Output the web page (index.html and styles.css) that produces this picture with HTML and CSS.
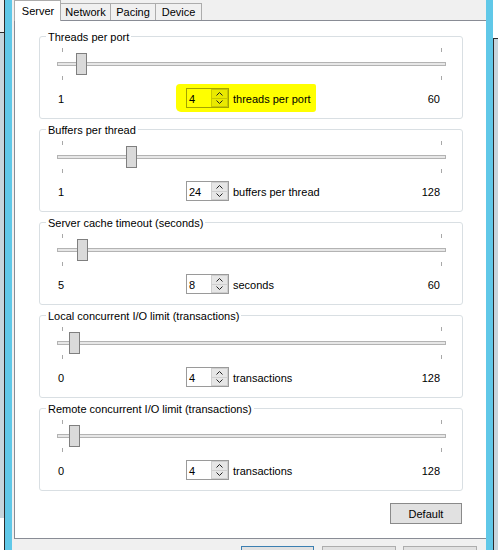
FILE: index.html
```html
<!DOCTYPE html>
<html>
<head>
<meta charset="utf-8">
<link rel="stylesheet" href="styles.css">
</head>
<body>
<div class="screen">
  <div class="edge-left">
    <div class="el-top"></div>
    <div class="el-mid"></div>
    <div class="el-bot"></div>
  </div>
  <div class="stripe"></div>
  <div class="dialog">
    <div class="tabs">
      <div class="tab active">Server</div>
      <div class="tab t-net">Network</div>
      <div class="tab t-pac">Pacing</div>
      <div class="tab t-dev">Device</div>
    </div>
    <div class="panel">
      <div class="group">
        <div class="legend"><span>Threads per port</span></div>
        <div class="slider">
          <div class="ticks"><i></i><i></i></div>
          <div class="track"></div>
          <div class="ticks ticks-bottom"><i></i><i></i></div>
          <div class="thumb" style="left:19px"></div>
        </div>
        <div class="row">
          <span class="min">1</span>
          <div class="hl">
            <div class="spin">
              <div class="spin-input">4</div>
              <div class="spin-btns">
                <div class="spin-btn"><svg width="7" height="4" viewBox="0 0 7 4"><polyline points="0.5,3.5 3.5,0.5 6.5,3.5" fill="none" stroke="#222" stroke-width="1"/></svg></div>
                <div class="spin-btn"><svg width="7" height="4" viewBox="0 0 7 4"><polyline points="0.5,0.5 3.5,3.5 6.5,0.5" fill="none" stroke="#222" stroke-width="1"/></svg></div>
              </div>
            </div>
            <span class="unit">threads per port</span>
          </div>
          <span class="max">60</span>
        </div>
      </div>

      <div class="group">
        <div class="legend"><span>Buffers per thread</span></div>
        <div class="slider">
          <div class="ticks"><i></i><i></i></div>
          <div class="track"></div>
          <div class="ticks ticks-bottom"><i></i><i></i></div>
          <div class="thumb" style="left:69px"></div>
        </div>
        <div class="row">
          <span class="min">1</span>
          <div class="spin">
            <div class="spin-input">24</div>
            <div class="spin-btns">
              <div class="spin-btn"><svg width="7" height="4" viewBox="0 0 7 4"><polyline points="0.5,3.5 3.5,0.5 6.5,3.5" fill="none" stroke="#222" stroke-width="1"/></svg></div>
              <div class="spin-btn"><svg width="7" height="4" viewBox="0 0 7 4"><polyline points="0.5,0.5 3.5,3.5 6.5,0.5" fill="none" stroke="#222" stroke-width="1"/></svg></div>
            </div>
          </div>
          <span class="unit">buffers per thread</span>
          <span class="max">128</span>
        </div>
      </div>

      <div class="group">
        <div class="legend"><span>Server cache timeout (seconds)</span></div>
        <div class="slider">
          <div class="ticks"><i></i><i></i></div>
          <div class="track"></div>
          <div class="ticks ticks-bottom"><i></i><i></i></div>
          <div class="thumb" style="left:20px"></div>
        </div>
        <div class="row">
          <span class="min">5</span>
          <div class="spin">
            <div class="spin-input">8</div>
            <div class="spin-btns">
              <div class="spin-btn"><svg width="7" height="4" viewBox="0 0 7 4"><polyline points="0.5,3.5 3.5,0.5 6.5,3.5" fill="none" stroke="#222" stroke-width="1"/></svg></div>
              <div class="spin-btn"><svg width="7" height="4" viewBox="0 0 7 4"><polyline points="0.5,0.5 3.5,3.5 6.5,0.5" fill="none" stroke="#222" stroke-width="1"/></svg></div>
            </div>
          </div>
          <span class="unit">seconds</span>
          <span class="max">60</span>
        </div>
      </div>

      <div class="group">
        <div class="legend"><span>Local concurrent I/O limit (transactions)</span></div>
        <div class="slider">
          <div class="ticks"><i></i><i></i></div>
          <div class="track"></div>
          <div class="ticks ticks-bottom"><i></i><i></i></div>
          <div class="thumb" style="left:12px"></div>
        </div>
        <div class="row">
          <span class="min">0</span>
          <div class="spin">
            <div class="spin-input">4</div>
            <div class="spin-btns">
              <div class="spin-btn"><svg width="7" height="4" viewBox="0 0 7 4"><polyline points="0.5,3.5 3.5,0.5 6.5,3.5" fill="none" stroke="#222" stroke-width="1"/></svg></div>
              <div class="spin-btn"><svg width="7" height="4" viewBox="0 0 7 4"><polyline points="0.5,0.5 3.5,3.5 6.5,0.5" fill="none" stroke="#222" stroke-width="1"/></svg></div>
            </div>
          </div>
          <span class="unit">transactions</span>
          <span class="max">128</span>
        </div>
      </div>

      <div class="group">
        <div class="legend"><span>Remote concurrent I/O limit (transactions)</span></div>
        <div class="slider">
          <div class="ticks"><i></i><i></i></div>
          <div class="track"></div>
          <div class="ticks ticks-bottom"><i></i><i></i></div>
          <div class="thumb" style="left:12px"></div>
        </div>
        <div class="row">
          <span class="min">0</span>
          <div class="spin">
            <div class="spin-input">4</div>
            <div class="spin-btns">
              <div class="spin-btn"><svg width="7" height="4" viewBox="0 0 7 4"><polyline points="0.5,3.5 3.5,0.5 6.5,3.5" fill="none" stroke="#222" stroke-width="1"/></svg></div>
              <div class="spin-btn"><svg width="7" height="4" viewBox="0 0 7 4"><polyline points="0.5,0.5 3.5,3.5 6.5,0.5" fill="none" stroke="#222" stroke-width="1"/></svg></div>
            </div>
          </div>
          <span class="unit">transactions</span>
          <span class="max">128</span>
        </div>
      </div>

      <div class="actions">
        <button class="btn btn-default">Default</button>
      </div>
    </div>
    <div class="footer">
      <div class="fbtn fbtn-primary"></div>
      <div class="fbtn fbtn-2"></div>
      <div class="fbtn fbtn-3"></div>
    </div>
  </div>
  <div class="stripe"></div>
  <div class="edge-right">
    <div class="er-top"></div>
    <div class="er-body"></div>
  </div>
</div>
</body>
</html>
```
FILE: styles.css
```css
* { box-sizing: border-box; }
html, body {
  margin: 0;
  padding: 0;
}
body {
  width: 498px;
  height: 550px;
  overflow: hidden;
  background: #f0f0f0;
  font-family: "Liberation Sans", Arial, sans-serif;
  font-size: 11px;
  color: #000;
}
.screen {
  display: flex;
  width: 498px;
  height: 550px;
  overflow: hidden;
}
.edge-left {
  width: 5px;
  flex: none;
  display: flex;
  flex-direction: column;
  border-right: 1px solid #2b2b2b;
}
.el-top { height: 33px; background: #f0f0f0; border-bottom: 1px solid #2b2b2b; }
.el-mid { height: 485px; background: #c6d5dc; }
.el-bot { flex: 1; background: #ffffff; }
.stripe {
  width: 7px;
  flex: none;
  background: #60c8e8;
}
.edge-right {
  width: 5px;
  flex: none;
  display: flex;
  flex-direction: column;
}
.er-top { height: 38px; background: #ffffff; }
.er-body {
  flex: 1;
  background: #c6d5dc;
  border-top: 1px solid #2b2b2b;
  border-left: 1px solid #2b2b2b;
}
.dialog {
  width: 474px;
  flex: none;
  background: #f0f0f0;
  display: flex;
  flex-direction: column;
}
.tabs {
  height: 21px;
  display: flex;
  align-items: flex-end;
  padding-left: 2px;
}
.tab {
  height: 17px;
  line-height: 17px;
  text-align: center;
  background: #f0f0f0;
  border-top: 1px solid #acacac;
  border-right: 1px solid #acacac;
}
.tab.active {
  position: relative;
  z-index: 1;
  width: 47px;
  height: 21px;
  line-height: 20px;
  margin-bottom: -1px;
  background: #ffffff;
  border-left: 1px solid #acacac;
  padding-left: 1px;
}
.t-net { width: 50px; }
.t-pac { width: 45px; }
.t-dev { width: 46px; }
.panel {
  margin-left: 2px;
  width: 472px;
  background: #ffffff;
  border-top: 1px solid #898c95;
  border-left: 1px solid #898c95;
  border-bottom: 1px solid #898c95;
  padding: 15px 23px 14px 24px;
  display: flex;
  flex-direction: column;
  gap: 10px;
}
.group {
  width: 424px;
  border: 1px solid #d9dfe3;
  border-radius: 3px;
  padding-bottom: 10px;
}
.legend {
  height: 13px;
  line-height: 13px;
  margin: -6px 0 0 6px;
}
.legend span {
  background: #ffffff;
  padding: 0 2px;
}
.slider {
  position: relative;
  width: 389px;
  height: 32px;
  margin: 4px 0 0 17px;
}
.ticks {
  height: 4px;
  display: flex;
  justify-content: space-between;
  padding: 0 4px 0 5px;
}
.ticks i {
  display: block;
  width: 1px;
  height: 4px;
  background: #a8a8a8;
}
.ticks-bottom { margin-top: 10px; }
.track {
  margin-top: 10px;
  height: 4px;
  background: #e7e7e7;
  border: 1px solid #b3b3b3;
}
.thumb {
  position: absolute;
  top: 5px;
  width: 11px;
  height: 22px;
  background: #dadada;
  border: 1px solid #7f7f7f;
}
.row {
  display: flex;
  align-items: center;
  height: 20px;
  margin-top: 8px;
  padding: 0 22px 0 18px;
}
.min, .unit, .max { padding-top: 2px; }
.min { width: 128px; }
.spin {
  display: flex;
  height: 20px;
  border: 1px solid #9a9a9a;
  background: #ffffff;
}
.spin-input {
  width: 24px;
  padding-left: 2px;
  padding-top: 1px;
  line-height: 18px;
}
.spin-btns {
  width: 17px;
  display: flex;
  flex-direction: column;
}
.spin-btn {
  flex: 1;
  display: flex;
  align-items: center;
  justify-content: center;
  background: #e6e6e6;
  border: 1px solid #cfcfcf;
}
.spin-btn + .spin-btn { border-top: none; }
.unit { margin-left: 4px; }
.max { margin-left: auto; }
.hl {
  display: flex;
  align-items: center;
  background: #ffff00;
  margin: -4px -5px -4px -10px;
  padding: 4px 5px 4px 10px;
  border-radius: 4px 2px 3px 5px;
}
.hl .spin {
  background: #ffff00;
  border-color: #a3a300;
}
.hl .spin-btn {
  background: #e9e900;
  border-color: #c8c800;
}
.actions {
  display: flex;
  justify-content: flex-end;
  margin-top: 2px;
  padding-right: 1px;
}
.btn {
  font-family: "Liberation Sans", Arial, sans-serif;
  font-size: 11px;
  color: #000;
  background: #e1e1e1;
  border: 1px solid #8a8a8a;
  padding: 0;
  margin: 0;
}
.btn-default {
  width: 72px;
  height: 21px;
  padding-top: 1px;
}
.footer {
  display: flex;
  margin-top: 7px;
  padding-left: 229px;
}
.fbtn {
  height: 23px;
  background: #e1e1e1;
  border: 1px solid #adadad;
}
.fbtn-primary { width: 73px; border-color: #3c7fb1; }
.fbtn-2 { width: 74px; margin-left: 8px; }
.fbtn-3 { width: 74px; margin-left: 7px; }
```
